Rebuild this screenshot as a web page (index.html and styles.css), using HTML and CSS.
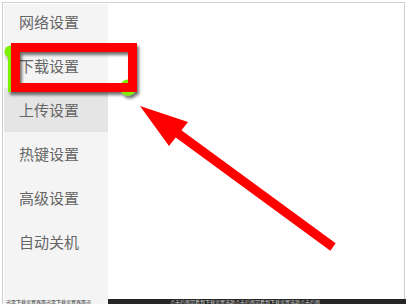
FILE: index.html
```html
<!DOCTYPE html>
<html lang="zh">
<head>
<meta charset="utf-8">
<link rel="stylesheet" href="styles.css">
</head>
<body>
<div class="page">
  <div class="frame">
    <nav class="sidebar">
      <div class="item first">网络设置</div>
      <div class="item">下载设置</div>
      <div class="item active">上传设置</div>
      <div class="item">热键设置</div>
      <div class="item">高级设置</div>
      <div class="item">自动关机</div>
    </nav>
    <main class="content"></main>
  </div>
  <div class="footer">
    <div class="foot-left">迅雷下载设置界面迅雷下载设置界面迅</div>
    <div class="foot-right"><span class="foot-text">点击后即可看到下载设置选项点击后即可看到下载设置选项点击后即</span></div>
  </div>
  <svg class="annot" width="406" height="304" viewBox="0 0 406 304">
    <defs>
      <filter id="sh" x="-20%" y="-20%" width="140%" height="160%">
        <feDropShadow dx="2" dy="3" stdDeviation="1.6" flood-color="#000" flood-opacity="0.55"/>
      </filter>
    </defs>
    <g filter="url(#sh)">
      <circle cx="10.5" cy="51.5" r="6" fill="#7bf000"/>
      <rect x="8" y="50" width="3.5" height="42" fill="#7bf000"/>
      <circle cx="128" cy="87.5" r="8" fill="#7bf000"/>
      <rect x="15.5" y="47.5" width="117" height="40" fill="none" stroke="#ff0000" stroke-width="9"/>
    </g>
    <line x1="176" y1="132" x2="333" y2="247" stroke="#ff0000" stroke-width="9"/>
    <polygon points="140,106 188,122 169,146" fill="#ff0000"/>
  </svg>
</div>
</body>
</html>
```
FILE: styles.css
```css
html, body {
  margin: 0;
  padding: 0;
  background: #ffffff;
}
.page {
  position: relative;
  width: 406px;
  height: 304px;
  overflow: hidden;
  background: #ffffff;
  font-family: "Noto Sans CJK SC", "Noto Sans", sans-serif;
}
.frame {
  margin: 2px 0 0 2px;
  width: 400px;
  height: 295px;
  border-top: 1px solid #cfcfcf;
  border-left: 1px solid #cfcfcf;
  border-right: 1px solid #cfcfcf;
  padding: 1px 0 0 1px;
  display: flex;
  box-sizing: content-box;
}
.sidebar {
  width: 104px;
  background: #f4f4f4;
  display: flex;
  flex-direction: column;
}
.item {
  height: 44px;
  line-height: 44px;
  padding-left: 15px;
  font-size: 15px;
  color: #666666;
  white-space: nowrap;
}
.item.first {
  height: 40px;
  line-height: 36px;
}
.item.active {
  background: #e5e5e5;
}
.content {
  flex: 1;
  background: #ffffff;
}
.footer {
  display: flex;
  height: 5px;
  margin-left: 2px;
  border-left: 1px solid #cfcfcf;
}
.foot-left {
  width: 105px;
  background: #f4f4f4;
  color: #222;
  font-size: 5px;
  line-height: 5px;
  padding-left: 3px;
  box-sizing: border-box;
  white-space: nowrap;
}
.foot-right {
  flex: 1;
  background: #262626;
  color: #d8d8d8;
  font-size: 5px;
  line-height: 5px;
  white-space: nowrap;
}
.foot-text {
  display: inline-block;
  margin-left: 62px;
}
.annot {
  position: absolute;
  left: 0;
  top: 0;
  pointer-events: none;
}
```
